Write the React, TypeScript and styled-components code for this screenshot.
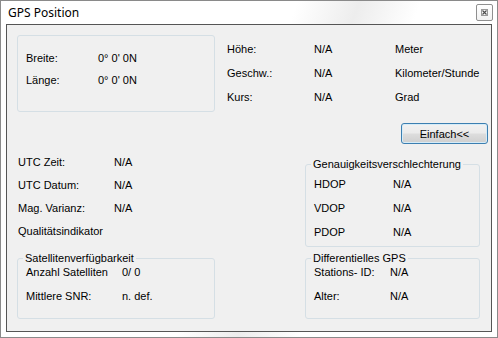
import styled, { createGlobalStyle } from 'styled-components';

const GlobalStyle = createGlobalStyle`
  html, body {
    margin: 0;
    padding: 0;
    background: #ffffff;
  }
  body {
    font-family: 'Liberation Sans', Arial, sans-serif;
    font-size: 11px;
    color: #000000;
  }
`;

const StyledWindow = styled.div`
  display: flex;
  flex-direction: column;
  box-sizing: border-box;
  width: 498px;
  height: 338px;
  padding: 0 5px 5px 5px;
  border: 1px solid #8a8a8a;
  background: linear-gradient(110deg, #ffffff 48%, #ededed 58%, #ffffff 68%);
`;

const StyledTitleBar = styled.div`
  display: flex;
  align-items: center;
  justify-content: space-between;
  height: 23px;
  padding-left: 2px;
`;

const StyledTitle = styled.span`
  font-family: 'Noto Sans', 'Open Sans', sans-serif;
  font-size: 12px;
  line-height: 23px;
`;

const StyledClose = styled.button`
  display: flex;
  align-items: center;
  justify-content: center;
  box-sizing: border-box;
  width: 17px;
  height: 17px;
  margin-right: -1px;
  padding: 0;
  border: 1px solid #8f8f8f;
  border-radius: 2px;
  background: linear-gradient(#ffffff, #f2f2f2);
`;

const StyledPanel = styled.div`
  display: flex;
  flex-direction: column;
  flex: 1;
  box-sizing: border-box;
  padding: 10px 3px 10px 10px;
  border: 1px solid #555555;
  background: #f0f0f0;
`;

const StyledSection = styled.div`
  display: flex;
  align-items: flex-start;
`;

const StyledPlainBox = styled.div`
  box-sizing: border-box;
  width: 198px;
  height: 77px;
  padding: 11px 0 0 8px;
  border: 1px solid #d5dfe5;
  border-radius: 3px;
`;

const StyledGroupBox = styled.fieldset<{ $width: number }>`
  box-sizing: border-box;
  width: ${(p) => p.$width}px;
  min-width: 0;
  margin: 0;
  padding: 0 0 0 8px;
  border: 1px solid #d5dfe5;
  border-radius: 3px;
`;

const StyledLegend = styled.legend`
  margin-left: -3px;
  padding: 0 2px;
  line-height: 12px;
`;

const StyledGrid = styled.div<{ $cols: string; $row: number; $gap?: number }>`
  display: grid;
  grid-template-columns: ${(p) => p.$cols};
  grid-auto-rows: ${(p) => p.$row}px;
  row-gap: ${(p) => p.$gap ?? 0}px;
  line-height: ${(p) => p.$row}px;
  white-space: nowrap;
`;

const StyledButtonRow = styled.div`
  display: flex;
  justify-content: flex-end;
  margin-top: 11px;
`;

const StyledButton = styled.button`
  box-sizing: border-box;
  width: 87px;
  height: 21px;
  padding: 0;
  border: 1px solid #3c7fb1;
  border-radius: 3px;
  font-family: 'Liberation Sans', Arial, sans-serif;
  font-size: 11px;
  color: #000000;
  background: linear-gradient(#f2f2f2 0%, #ebebeb 48%, #dddddd 52%, #cfcfcf 100%);
  box-shadow: inset 0 0 0 1px #d6ecf8;
`;

const StyledList = styled.div`
  flex: 1;
  margin-top: 7px;
  padding-left: 1px;
`;

const Row = ({ items }: { items: string[] }) => (
  <>
    {items.map((text, i) => (
      <span key={i}>{text}</span>
    ))}
  </>
);

export default function App() {
  return (
    <>
      <GlobalStyle />
      <StyledWindow>
        <StyledTitleBar>
          <StyledTitle>GPS Position</StyledTitle>
          <StyledClose aria-label="Schließen">
            <svg width="7" height="7" viewBox="0 0 7 7">
              <rect x="0.5" y="0.5" width="6" height="6" fill="none" stroke="#9a9a9a" strokeWidth="1" />
              <path d="M1.5 1.5 L5.5 5.5 M5.5 1.5 L1.5 5.5" stroke="#4a4a4a" strokeWidth="1.1" fill="none" />
            </svg>
          </StyledClose>
        </StyledTitleBar>

        <StyledPanel>
          <StyledSection>
            <StyledPlainBox>
              <StyledGrid $cols="72px 1fr" $row={22}>
                <Row items={['Breite:', "0° 0' 0N"]} />
                <Row items={['Länge:', "0° 0' 0N"]} />
              </StyledGrid>
            </StyledPlainBox>
            <StyledGrid
              $cols="87px 81px 1fr"
              $row={24}
              style={{ marginTop: 2, marginLeft: 12 }}
            >
              <Row items={['Höhe:', 'N/A', 'Meter']} />
              <Row items={['Geschw.:', 'N/A', 'Kilometer/Stunde']} />
              <Row items={['Kurs:', 'N/A', 'Grad']} />
            </StyledGrid>
          </StyledSection>

          <StyledButtonRow>
            <StyledButton>Einfach&lt;&lt;</StyledButton>
          </StyledButtonRow>

          <StyledSection>
            <StyledList>
              <StyledGrid $cols="96px 1fr" $row={23}>
                <Row items={['UTC Zeit:', 'N/A']} />
                <Row items={['UTC Datum:', 'N/A']} />
                <Row items={['Mag. Varianz:', 'N/A']} />
                <Row items={['Qualitätsindikator', '']} />
              </StyledGrid>
            </StyledList>
            <StyledGroupBox $width={175} style={{ marginTop: 14, marginRight: 8 }}>
              <StyledLegend>Genauigkeitsverschlechterung</StyledLegend>
              <StyledGrid $cols="79px 1fr" $row={24} style={{ padding: '2px 0 2px' }}>
                <Row items={['HDOP', 'N/A']} />
                <Row items={['VDOP', 'N/A']} />
                <Row items={['PDOP', 'N/A']} />
              </StyledGrid>
            </StyledGroupBox>
          </StyledSection>

          <StyledSection style={{ marginTop: 5, justifyContent: 'space-between' }}>
            <StyledGroupBox $width={198}>
              <StyledLegend>Satellitenverfügbarkeit</StyledLegend>
              <StyledGrid $cols="96px 1fr" $row={16} $gap={8} style={{ paddingBottom: 14 }}>
                <Row items={['Anzahl Satelliten', '0/ 0']} />
                <Row items={['Mittlere SNR:', 'n. def.']} />
              </StyledGrid>
            </StyledGroupBox>
            <StyledGroupBox $width={175} style={{ marginRight: 8 }}>
              <StyledLegend>Differentielles GPS</StyledLegend>
              <StyledGrid $cols="76px 1fr" $row={16} $gap={8} style={{ paddingBottom: 14 }}>
                <Row items={['Stations- ID:', 'N/A']} />
                <Row items={['Alter:', 'N/A']} />
              </StyledGrid>
            </StyledGroupBox>
          </StyledSection>
        </StyledPanel>
      </StyledWindow>
    </>
  );
}
